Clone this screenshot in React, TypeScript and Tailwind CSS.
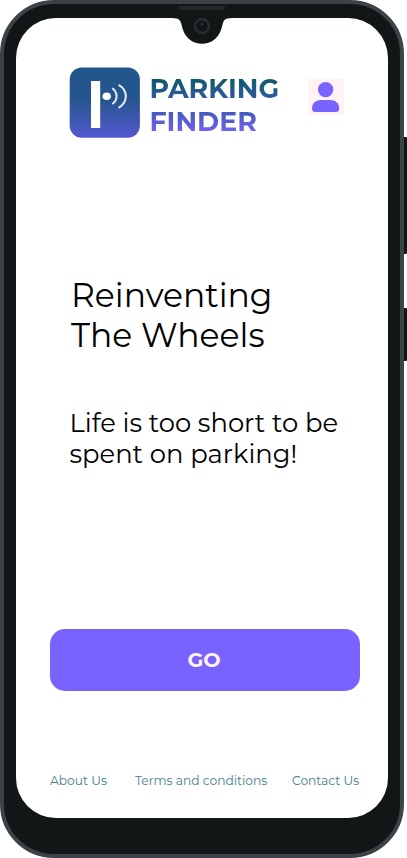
import React from 'react';

function Notch() {
  return (
    <svg className="absolute left-[170px] top-0 h-[46px] w-[64px]" viewBox="0 0 64 46" fill="none">
      <path d="M3 17V18.2C8 18.2 10 19.5 11 23L13 30C16 38.5 23 43.8 32 43.8S48 38.5 51 30L53 23C54 19.5 56 18.2 61 18.2V17Z" fill="#121617" />
      <path d="M8 6H56L53 10H11Z" fill="#23282b" />
      <circle cx="32" cy="26" r="7" stroke="#292d30" strokeWidth="2.5" />
      <circle cx="32" cy="24.3" r="1.1" fill="#3b4347" />
    </svg>
  );
}

function Logo() {
  return (
    <svg className="h-[71px] w-[71px] shrink-0" viewBox="0 0 71 71" fill="none">
      <defs>
        <linearGradient id="tile" x1="0" y1="0" x2="0" y2="1">
          <stop offset="0" stopColor="#23568c" />
          <stop offset=".45" stopColor="#24558d" />
          <stop offset="1" stopColor="#5459d1" />
        </linearGradient>
      </defs>
      <rect x=".7" y=".5" width="70.2" height="70.2" rx="12" fill="url(#tile)" />
      <rect x="22" y="14" width="9.2" height="47" fill="#fff" />
      <ellipse cx="37.7" cy="29.2" rx="4.2" ry="3.8" fill="#fff" />
      <path d="M43.3 21.2C49 25.5 49 33 43.3 37" stroke="#e7ecf6" strokeWidth="2" />
      <path d="M49.6 17.9C59.2 23.2 59.2 35.5 49.6 40.8" stroke="#e7ecf6" strokeWidth="2" />
    </svg>
  );
}

export default function App() {
  return (
    <div className="flex h-[858px] w-[407px] overflow-hidden bg-white font-['Montserrat','Inter',sans-serif]">
      <div className="relative h-[858px] w-[404px] shrink-0 rounded-[54px] border-4 border-[#3b4347] bg-[#121617] px-3 pt-[14px]">
        <main className="flex h-[800px] w-[372px] flex-col rounded-[40px] bg-white">
          <header className="flex pl-[53px] pt-[49px]">
            <Logo />
            <div className="ml-[9.5px] mt-[5px] flex w-[140px] flex-col whitespace-nowrap text-[26.8px] font-bold leading-[33px]">
              <span className="bg-gradient-to-b from-[#0b596b] from-20% to-[#3459a8] to-90% bg-clip-text text-transparent">PARKING</span>
              <span className="bg-gradient-to-b from-[#4659bd] from-20% to-[#6e63ed] to-80% bg-clip-text text-transparent">FINDER</span>
            </div>
            <button aria-label="Profile" className="ml-[18.5px] mt-[12px] h-9 w-9 bg-[#fff2f2]">
              <svg className="h-9 w-9" viewBox="0 0 36 36" fill="#7863ff">
                <circle cx="17.6" cy="10.6" r="7.7" />
                <path d="M4 29.5C4 24.5 7.6 21 12.6 21H22.6C27.6 21 31.2 24.5 31.2 29.5C31.2 31.8 30.1 33 28.1 33H7.1C5.1 33 4 31.8 4 29.5Z" />
              </svg>
            </button>
          </header>
          <h1 className="mt-[137px] flex flex-col whitespace-nowrap pl-[55px] text-[33px] font-normal leading-10 text-black">
            <span>Reinventing</span>
            <span className="tracking-[0.05px]">The Wheels</span>
          </h1>
          <p className="mt-[52px] flex flex-col whitespace-nowrap pl-[53.5px] text-[25.8px] font-normal leading-[31px] text-black">
            <span>Life is too short to be</span>
            <span>spent on parking!</span>
          </p>
          <button className="ml-[34px] mt-[160px] h-[62px] w-[310px] rounded-[15px] bg-[#7863ff] pr-0.5 text-[20.5px] font-bold text-[#fff2f2]">GO</button>
          <footer className="mt-[80px] flex whitespace-nowrap pl-[34px] text-[12.25px] leading-5 text-[#45808c]">
            <a className="w-[85px]">About Us</a>
            <a className="w-[157px]">Terms and conditions</a>
            <a>Contact Us</a>
          </footer>
        </main>
        <div className="absolute -left-1 -top-1"><Notch /></div>
      </div>
      <div className="flex w-[3px] flex-col pt-[137px]">
        <div className="h-[117px] rounded-r-[1px] bg-[#121617]" />
        <div className="mt-[54px] h-[53px] rounded-r-[1px] bg-[#121617]" />
      </div>
    </div>
  );
}
